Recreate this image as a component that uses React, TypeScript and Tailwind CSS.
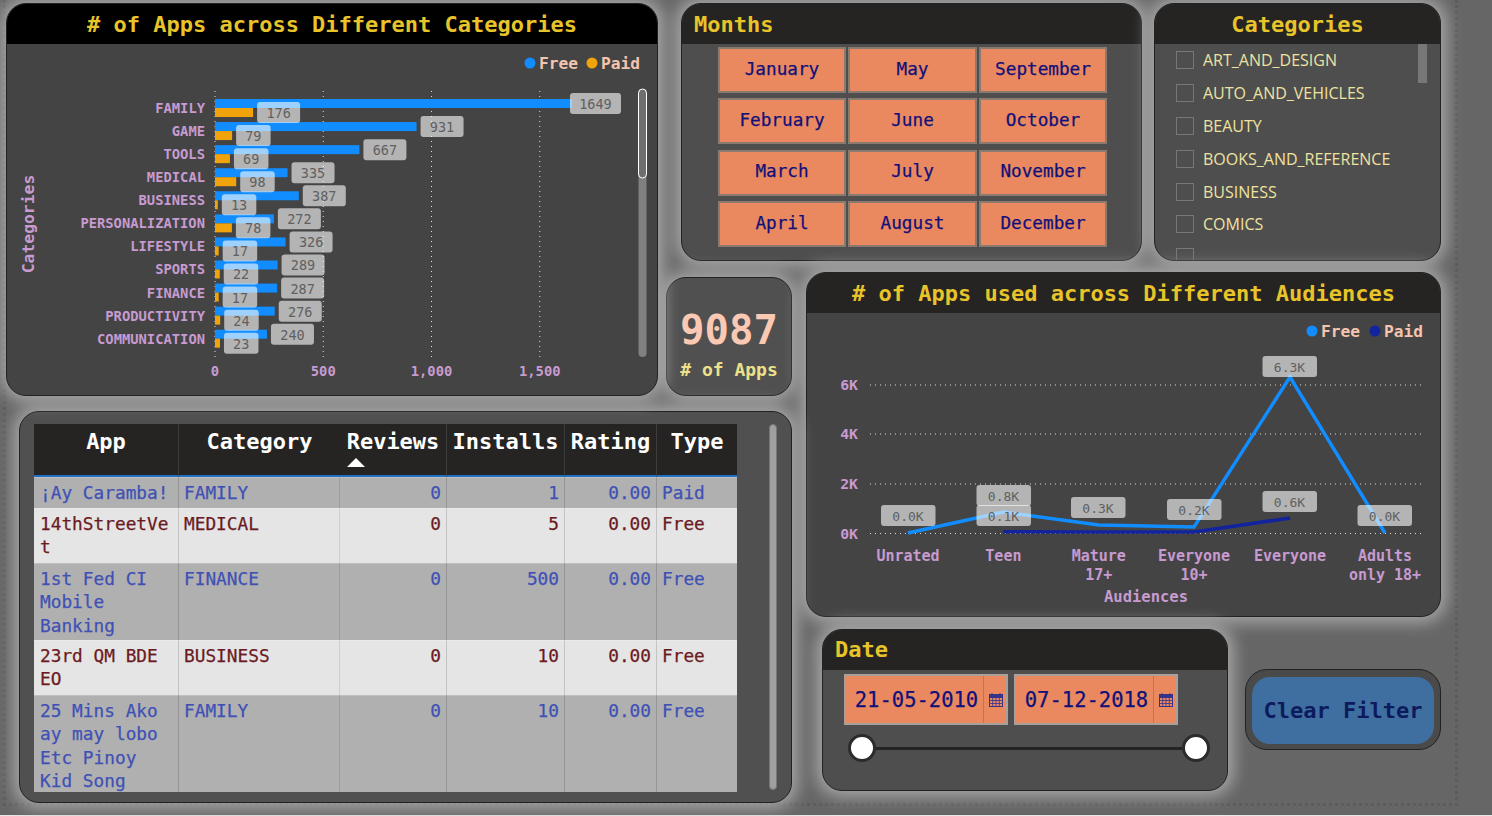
import React from 'react';

const monthRows = [
  ['January', 'May', 'September'],
  ['February', 'June', 'October'],
  ['March', 'July', 'November'],
  ['April', 'August', 'December'],
];

const categoryList = ['ART_AND_DESIGN', 'AUTO_AND_VEHICLES', 'BEAUTY', 'BOOKS_AND_REFERENCE', 'BUSINESS', 'COMICS', ''];

const barData = [
  { name: 'FAMILY', free: 1649, paid: 176 },
  { name: 'GAME', free: 931, paid: 79 },
  { name: 'TOOLS', free: 667, paid: 69 },
  { name: 'MEDICAL', free: 335, paid: 98 },
  { name: 'BUSINESS', free: 387, paid: 13 },
  { name: 'PERSONALIZATION', free: 272, paid: 78 },
  { name: 'LIFESTYLE', free: 326, paid: 17 },
  { name: 'SPORTS', free: 289, paid: 22 },
  { name: 'FINANCE', free: 287, paid: 17 },
  { name: 'PRODUCTIVITY', free: 276, paid: 24 },
  { name: 'COMMUNICATION', free: 240, paid: 23 },
];

const tableRows = [
  { app: '¡Ay Caramba!', category: 'FAMILY', installs: '1', type: 'Paid', h: 'h-[31px]', odd: true },
  { app: '14thStreetVet', category: 'MEDICAL', installs: '5', type: 'Free', h: 'h-[55px]', odd: false },
  { app: '1st Fed CI Mobile Banking', category: 'FINANCE', installs: '500', type: 'Free', h: 'h-[77px]', odd: true },
  { app: '23rd QM BDE EO', category: 'BUSINESS', installs: '10', type: 'Free', h: 'h-[55px]', odd: false },
  { app: '25 Mins Ako ay may lobo Etc Pinoy Kid Song', category: 'FAMILY', installs: '10', type: 'Free', h: 'h-[97px]', odd: true },
];

const LABEL = '#c79bd0';

const ValueBox = ({ x, y, w, text }: { x: number; y: number; w: number; text: string }) => (
  <g>
    <rect x={x} y={y} width={w} height={21} rx={3} fill="#fff" fillOpacity={0.6} />
    <text x={x + w / 2} y={y + 16} textAnchor="middle" fontSize={13.5} fill="#606060">{text}</text>
  </g>
);

const Legend = ({ paidColor, x, y, gap }: { paidColor: string; x: number; y: number; gap: number }) => (
  <g fontSize={16.2} fontWeight={700} fill="#f5c4af">
    <circle cx={x} cy={y} r={5.5} fill="#118dff" />
    <text x={x + 9} y={y + 5.5}>Free</text>
    <circle cx={x + gap} cy={y} r={5.5} fill={paidColor} />
    <text x={x + gap + 9} y={y + 5.5}>Paid</text>
  </g>
);

const CategoryChart = () => {
  const x0 = 215;
  const scale = 0.2165;
  return (
    <svg viewBox="7 44 650 351" className="block h-[351px] w-[650px]">
      {[0, 500, 1000, 1500].map((v) => (
        <g key={v}>
          <line x1={x0 + v * scale} x2={x0 + v * scale} y1={91} y2={358} stroke="#ddd" strokeDasharray="1 4" />
          <text x={x0 + v * scale} y={376} textAnchor="middle" fontSize={13.8} fontWeight={700} fill={LABEL}>
            {v.toLocaleString('en-US')}
          </text>
        </g>
      ))}
      {barData.map((d, i) => {
        const y = 99 + i * 23.07;
        return (
          <g key={d.name}>
            <text x={205} y={y + 14} textAnchor="end" fontSize={13.8} fontWeight={700} fill={LABEL}>{d.name}</text>
            <rect x={x0} y={y} width={d.free * scale} height={9} fill="#118dff" />
            <rect x={x0} y={y + 9} width={d.paid * scale} height={9} fill="#f0a30a" />
          </g>
        );
      })}
      {barData.map((d, i) => {
        const y = 99 + i * 23.07;
        const freeEnd = x0 + d.free * scale;
        const paidEnd = x0 + d.paid * scale;
        const freeW = d.free > 999 ? 51 : 43;
        const paidW = d.paid > 99 ? 43 : 34.5;
        return (
          <g key={d.name}>
            <ValueBox x={Math.min(freeEnd + 4, 570)} y={y - 6} w={freeW} text={String(d.free)} />
            <ValueBox x={paidEnd + 4} y={y + 3} w={paidW} text={String(d.paid)} />
          </g>
        );
      })}
      <Legend paidColor="#f0a30a" x={530} y={63} gap={62} />
      <text transform="translate(34 224) rotate(-90)" textAnchor="middle" fontSize={16.4} fontWeight={700} fill={LABEL}>
        Categories
      </text>
      <rect x={638.5} y={89} width={8} height={268} rx={4} fill="#808080" />
      <rect x={638.5} y={89} width={8} height={89} rx={4} fill="#6e6e6e" stroke="#fff" strokeWidth={1} />
    </svg>
  );
};

const AudienceChart = () => {
  const xs = [908, 1003.4, 1098.8, 1194, 1290, 1385];
  const free = [533, 512, 525, 527, 377, 533];
  const paid = [531.7, 532, 532, 518];
  const boxes = [
    { x: 881, y: 505, t: '0.0K' },
    { x: 976.5, y: 485, t: '0.8K' },
    { x: 976.5, y: 505, t: '0.1K' },
    { x: 1071, y: 497, t: '0.3K' },
    { x: 1167, y: 499, t: '0.2K' },
    { x: 1262.5, y: 491, t: '0.6K' },
    { x: 1262.5, y: 356, t: '6.3K' },
    { x: 1357.5, y: 505, t: '0.0K' },
  ];
  const axis = [
    { y: 385, t: '6K' },
    { y: 434, t: '4K' },
    { y: 484, t: '2K' },
    { y: 533.5, t: '0K' },
  ];
  const ticks = [
    { x: 908, lines: ['Unrated'] },
    { x: 1003.4, lines: ['Teen'] },
    { x: 1098.8, lines: ['Mature', '17+'] },
    { x: 1194, lines: ['Everyone', '10+'] },
    { x: 1290, lines: ['Everyone'] },
    { x: 1385, lines: ['Adults', 'only 18+'] },
  ];
  return (
    <svg viewBox="807 313 633 303" className="block h-[303px] w-[633px]">
      {axis.map((a) => (
        <g key={a.t}>
          <line x1={870} x2={1421} y1={a.y} y2={a.y} stroke="#ddd" strokeDasharray="1 4" />
          <text x={858} y={a.y + 5} textAnchor="end" fontSize={14.8} fontWeight={700} fill={LABEL}>{a.t}</text>
        </g>
      ))}
      <polyline fill="none" stroke="#118dff" strokeWidth={3.5} points={xs.map((x, i) => `${x},${free[i]}`).join(' ')} />
      <polyline fill="none" stroke="#12239e" strokeWidth={3.5} points={xs.slice(1, 5).map((x, i) => `${x},${paid[i]}`).join(' ')} />
      {boxes.map((b) => (
        <g key={`${b.x}-${b.y}`}>
          <rect x={b.x} y={b.y} width={54.5} height={21} rx={3} fill="#fff" fillOpacity={0.6} />
          <text x={b.x + 27} y={b.y + 16} textAnchor="middle" fontSize={13} fill="#606060">{b.t}</text>
        </g>
      ))}
      {ticks.map((t) =>
        t.lines.map((line, i) => (
          <text key={line} x={t.x} y={561 + i * 19} textAnchor="middle" fontSize={15} fontWeight={700} fill={LABEL}>{line}</text>
        )),
      )}
      <text x={1146} y={602} textAnchor="middle" fontSize={15.5} fontWeight={700} fill={LABEL}>Audiences</text>
      <Legend paidColor="#12239e" x={1312} y={331} gap={63} />
    </svg>
  );
};

const CalendarIcon = () => (
  <svg viewBox="0 0 14 14" className="h-[14px] w-[14px]" fill="none" stroke="#34348a" strokeWidth={1}>
    <rect x={0.5} y={1.5} width={13} height={12} />
    <rect x={0.5} y={1.5} width={13} height={3} fill="#34348a" />
    <path d="M3 0v2M11 0v2M0.5 7.5h13M0.5 10.5h13M3.7 4.5v9M7 4.5v9M10.3 4.5v9" strokeWidth={0.8} />
  </svg>
);

const DateInput = ({ value }: { value: string }) => (
  <div className="flex h-[51px] w-[164px] items-center border-2 border-[#aaa09a] bg-[#ea885f]">
    <span className="flex-1 pl-[4px] pt-[1px] text-center text-[20.5px] text-[#10107a] [-webkit-text-stroke:0.25px]">{value}</span>
    <span className="flex h-full w-[23px] items-center justify-center border-l border-[#c47350] pl-[1px]">
      <CalendarIcon />
    </span>
  </div>
);

const cardShadow = 'shadow-[0_0_16px_6px_rgba(172,172,172,0.9)]';

export default function App() {
  return (
    <div className="h-[816px] w-[1492px] overflow-hidden bg-[#666] font-['DejaVu_Sans_Mono',monospace]">
      <div className="ml-[3px] grid h-[806px] w-[1455px] grid-cols-[652px_8px_15px_111px_14px_16px_320px_12px_74px_17px_196px] grid-rows-[258px_11px_5px_119px_15px_206px_12px_40px_81px_41px_12px] border-x-[3px] border-b-[3px] border-dotted border-[#5c5c5c] pt-[3px]">
        <section className={`z-10 col-[1/2] row-[1/5] overflow-hidden rounded-[20px] border border-[#222] bg-[#444] ${cardShadow}`}>
          <h2 className="flex h-10 items-center justify-center bg-black text-[22px] font-bold text-[#e8c42a]">
            # of Apps across Different Categories
          </h2>
          <CategoryChart />
        </section>

        <section className={`col-[4/8] row-[1/2] overflow-hidden rounded-[20px] border border-[#222] bg-[#4e4e4e] ${cardShadow}`}>
          <h2 className="flex h-10 items-center bg-[#252423] pl-3 text-[22px] font-bold text-[#e8c42a]">Months</h2>
          <div className="grid grid-cols-[128px_129px_128px] gap-x-[2px] gap-y-[5.3px] pl-[36px] pt-[3px]">
            {monthRows.flat().map((m) => (
              <button key={m} className="h-[46px] border-2 border-[#8a7a70] bg-[#ea885f] pb-[2px] text-[17.7px] text-[#10107a] [-webkit-text-stroke:0.25px]">
                {m}
              </button>
            ))}
          </div>
        </section>

        <section className={`col-[9/12] row-[1/2] overflow-hidden rounded-[20px] border border-[#222] bg-[#4e4e4e] ${cardShadow}`}>
          <h2 className="flex h-10 items-center justify-center bg-[#252423] text-[22px] font-bold text-[#e8c42a]">Categories</h2>
          <div className="relative h-[216px] overflow-hidden pl-[21px]">
            {categoryList.map((c) => (
              <div key={c || 'next'} className="flex h-[32.8px] items-center gap-[9px] font-['Open_Sans',sans-serif] text-[16px] text-[#efe2a0]">
                <span className="h-[18px] w-[18px] shrink-0 border border-[#777]" />
                {c}
              </div>
            ))}
            <div className="absolute right-[13px] top-0 h-[39px] w-[9px] bg-[#777]" />
          </div>
        </section>

        <section className={`col-[3/5] row-[4/5] flex flex-col items-center overflow-hidden rounded-[20px] border border-[#222] bg-[#505050] ${cardShadow}`}>
          <div className="mt-[27px] text-[40.7px] font-bold leading-[50px] text-[#fbc9b3]">9087</div>
          <div className="mt-[3px] text-[18px] font-bold leading-[24px] text-[#eee08a]"># of Apps</div>
        </section>

        <section className={`col-[6/12] row-[3/7] overflow-hidden rounded-[20px] border border-[#222] bg-[#444] ${cardShadow}`}>
          <h2 className="flex h-10 items-center justify-center bg-[#252423] text-[22px] font-bold text-[#e8c42a]">
            # of Apps used across Different Audiences
          </h2>
          <AudienceChart />
        </section>

        <section className={`col-[1/5] row-[6/12] ml-[13px] overflow-hidden rounded-[20px] border border-[#222] bg-[#505050] ${cardShadow}`}>
          <div className="flex">
            <div className="ml-[14px] mt-[12px] h-[368px] w-[703px] overflow-hidden">
              <table className="w-[703px] table-fixed border-separate border-spacing-0">
                <colgroup>
                  <col className="w-[145px]" />
                  <col className="w-[161px]" />
                  <col className="w-[107px]" />
                  <col className="w-[118px]" />
                  <col className="w-[92px]" />
                  <col className="w-[80px]" />
                </colgroup>
                <thead>
                  <tr className="h-[53px] bg-[#252423] align-top text-[22px] font-bold leading-[26px] text-white">
                    <th className="border-b-2 border-r border-b-[#1f6fc4] border-r-[#3c3c3c] pt-[5px]">App</th>
                    <th className="border-b-2 border-b-[#1f6fc4] pt-[5px]">Category</th>
                    <th className="border-b-2 border-r border-b-[#1f6fc4] border-r-[#3c3c3c] pt-[5px]">
                      Reviews
                      <svg viewBox="0 0 18 9" className="ml-[7px] mt-[3px] block h-[9px] w-[18px]">
                        <path d="M9 0l9 9H0z" fill="#fff" />
                      </svg>
                    </th>
                    <th className="border-b-2 border-r border-b-[#1f6fc4] border-r-[#3c3c3c] pt-[5px]">Installs</th>
                    <th className="border-b-2 border-r border-b-[#1f6fc4] border-r-[#3c3c3c] pt-[5px]">Rating</th>
                    <th className="border-b-2 border-b-[#1f6fc4] pt-[5px]">Type</th>
                  </tr>
                </thead>
                <tbody>
                  {tableRows.map((r) => (
                    <tr
                      key={r.app}
                      className={`${r.h} align-top text-[17.8px] leading-[23.4px] [-webkit-text-stroke:0.25px] ${r.odd ? 'bg-[#b0b0b0] text-[#3f51b5]' : 'bg-[#e5e5e5] text-[#6b1a1f]'}`}
                    >
                      <td className="border-r border-t border-r-black/15 border-t-white/20 px-[6px] pt-[3px] [overflow-wrap:anywhere]">{r.app}</td>
                      <td className="border-r border-t border-r-black/10 border-t-white/20 px-[5px] pt-[3px]">{r.category}</td>
                      <td className="border-r border-t border-r-black/15 border-t-white/20 px-[5px] pt-[3px] text-right">0</td>
                      <td className="border-r border-t border-r-black/15 border-t-white/20 px-[5px] pt-[3px] text-right">{r.installs}</td>
                      <td className="border-r border-t border-r-black/15 border-t-white/20 px-[5px] pt-[3px] text-right">0.00</td>
                      <td className="border-t border-t-white/20 px-[5px] pt-[3px]">{r.type}</td>
                    </tr>
                  ))}
                </tbody>
              </table>
            </div>
            <div className="ml-[32px] mt-[12px] h-[366px] w-[8px] rounded-full border border-[#777] bg-[#a0a0a0]" />
          </div>
        </section>

        <section className={`col-[7/10] row-[8/11] overflow-hidden rounded-[20px] border border-[#222] bg-[#4e4e4e] ${cardShadow}`}>
          <h2 className="flex h-10 items-center bg-[#252423] pb-[2px] pl-3 text-[22px] font-bold text-[#e8c42a]">Date</h2>
          <div className="flex gap-[6px] pl-[21px] pt-[4px]">
            <DateInput value="21-05-2010" />
            <DateInput value="07-12-2018" />
          </div>
          <div className="ml-[25px] mt-[9px] flex w-[362px] items-center">
            <span className="h-[28px] w-[28px] rounded-full border-[3px] border-[#2b2b2b] bg-white" />
            <span className="h-[3px] flex-1 bg-[#252423]" />
            <span className="h-[28px] w-[28px] rounded-full border-[3px] border-[#2b2b2b] bg-white" />
          </div>
        </section>

        <section className="col-[11/12] row-[9/10] rounded-[22px] border border-[#222] bg-[#4a4a4a] px-[6px] pb-[5px] pt-[7px]">
          <button className="h-full w-full rounded-[18px] bg-[#3f6fa0] text-[22px] font-bold text-[#0d1b5e]">Clear Filter</button>
        </section>
      </div>
      <div className="mt-[9px] h-px bg-[#e8e8e8]" />
    </div>
  );
}
